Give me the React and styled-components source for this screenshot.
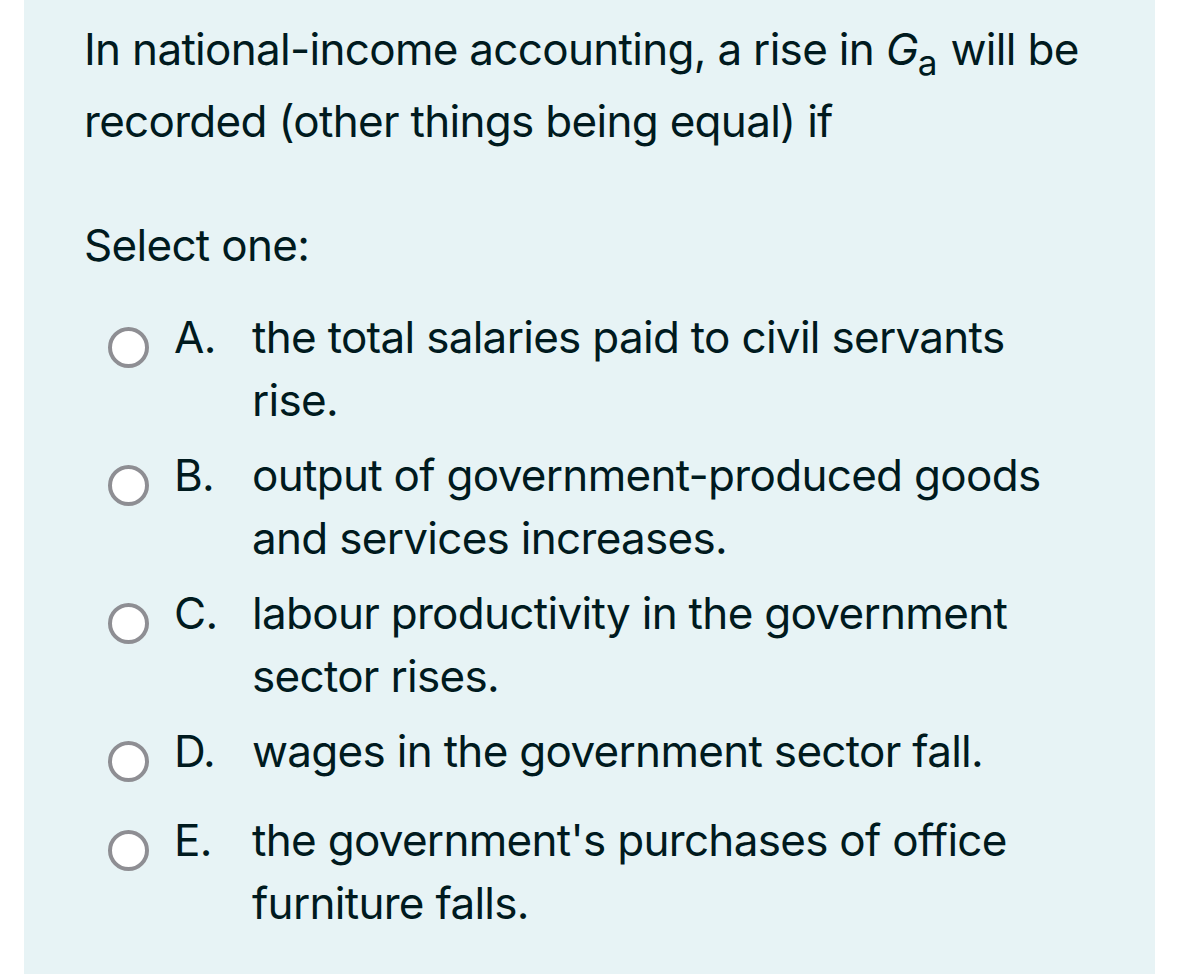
import styled, { createGlobalStyle } from "styled-components";

const GlobalStyle = createGlobalStyle`
    html, body {
        margin: 0;
        padding: 0;
        background: #ffffff;
    }
    body {
        font-family: Inter, "Noto Sans", "Liberation Sans", sans-serif;
        color: #001a1e;
    }
`;

const Page = styled.div`
    min-height: 974px;
    padding: 0 24px;
    display: flex;
`;

const Panel = styled.section`
    flex: 1;
    background-color: #e7f3f5;
    padding: 13px 62px 40px 60px;
    font-size: 44px;
    letter-spacing: -0.7px;
`;

const QuestionText = styled.p`
    margin: 0;
    line-height: 72px;
`;

const Var = styled.i`
    font-style: italic;
`;

const Sub = styled.sub`
    font-size: 0.8em;
    line-height: 0;
    vertical-align: -0.27em;
    margin-right: 2px;
`;

const Prompt = styled.div`
    margin-top: 57px;
    line-height: 63px;
`;

const AnswerList = styled.div`
    margin-top: 29px;
    display: flex;
    flex-direction: column;
    gap: 12px;
`;

const Answer = styled.label`
    display: flex;
    align-items: flex-start;
    min-height: 77px;
    line-height: 63px;
    padding-left: 24px;
`;

const Radio = styled.span`
    flex: none;
    box-sizing: border-box;
    width: 41px;
    height: 41px;
    margin-top: 21px;
    border-radius: 50%;
    border: 4px solid #8e8e93;
    background: #ffffff;
`;

const Letter = styled.span`
    flex: none;
    width: 78px;
    margin-left: 25px;
`;

const AnswerText = styled.span`
    flex: 1;
`;

const answers = [
    { letter: "A.", text: "the total salaries paid to civil servants rise." },
    { letter: "B.", text: "output of government-produced goods and services increases." },
    { letter: "C.", text: "labour productivity in the government sector rises." },
    { letter: "D.", text: "wages in the government sector fall." },
    { letter: "E.", text: "the government's purchases of office furniture falls." },
];

export default function App() {
    return (
        <>
            <GlobalStyle />
            <Page>
                <Panel>
                    <QuestionText>
                        In national-income accounting, a rise in <Var>G</Var><Sub>a</Sub> will be recorded (other things being equal) if
                    </QuestionText>
                    <Prompt>Select one:</Prompt>
                    <AnswerList>
                        {answers.map((a) => (
                            <Answer key={a.letter}>
                                <Radio />
                                <Letter>{a.letter}</Letter>
                                <AnswerText>{a.text}</AnswerText>
                            </Answer>
                        ))}
                    </AnswerList>
                </Panel>
            </Page>
        </>
    );
}
